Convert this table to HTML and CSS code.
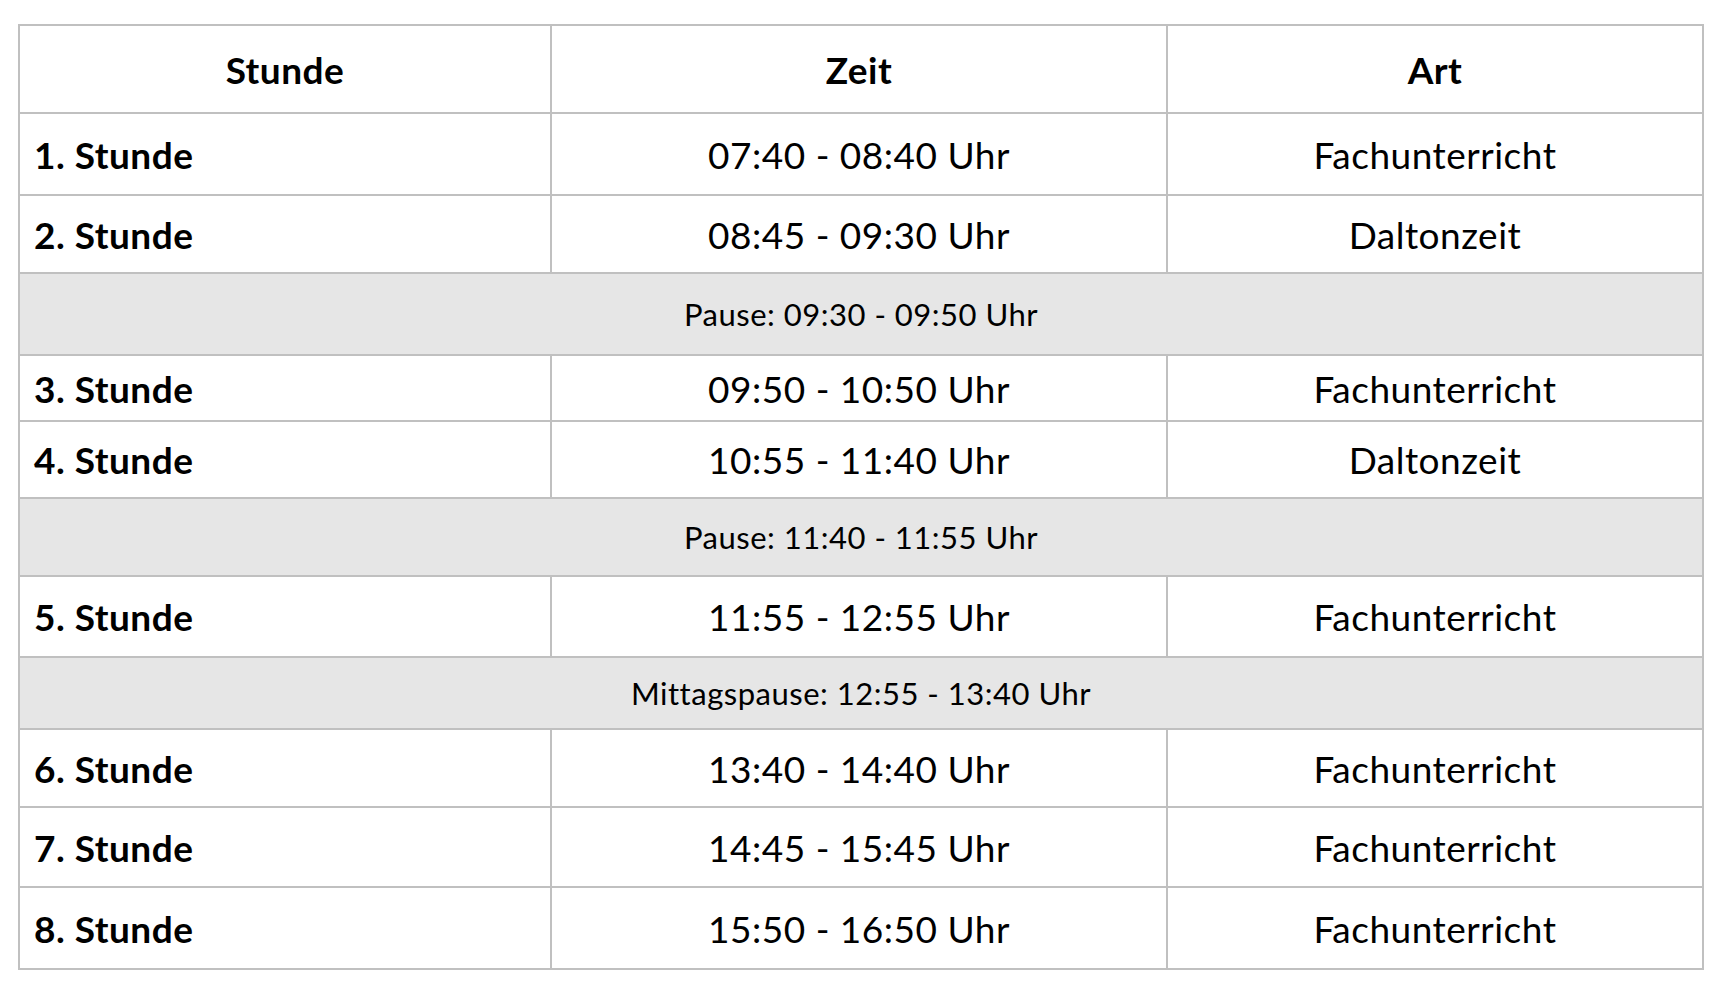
FILE: index.html
```html
<!DOCTYPE html>
<html lang="de">
<head>
<meta charset="utf-8">
<title>Stundenplan</title>
<link rel="stylesheet" href="styles.css">
</head>
<body>
<table class="plan">
  <colgroup>
    <col class="c1">
    <col class="c2">
    <col class="c3">
  </colgroup>
  <thead>
    <tr class="r-head">
      <th>Stunde</th>
      <th>Zeit</th>
      <th>Art</th>
    </tr>
  </thead>
  <tbody>
    <tr class="r82"><td class="nr">1. Stunde</td><td>07:40 - 08:40 Uhr</td><td>Fachunterricht</td></tr>
    <tr class="r78"><td class="nr">2. Stunde</td><td>08:45 - 09:30 Uhr</td><td>Daltonzeit</td></tr>
    <tr class="pause r82"><td colspan="3">Pause: 09:30 - 09:50 Uhr</td></tr>
    <tr class="r66"><td class="nr">3. Stunde</td><td>09:50 - 10:50 Uhr</td><td>Fachunterricht</td></tr>
    <tr class="r77"><td class="nr">4. Stunde</td><td>10:55 - 11:40 Uhr</td><td>Daltonzeit</td></tr>
    <tr class="pause r78"><td colspan="3">Pause: 11:40 - 11:55 Uhr</td></tr>
    <tr class="r81"><td class="nr">5. Stunde</td><td>11:55 - 12:55 Uhr</td><td>Fachunterricht</td></tr>
    <tr class="pause r72"><td colspan="3">Mittagspause: 12:55 - 13:40 Uhr</td></tr>
    <tr class="r78"><td class="nr">6. Stunde</td><td>13:40 - 14:40 Uhr</td><td>Fachunterricht</td></tr>
    <tr class="r80"><td class="nr">7. Stunde</td><td>14:45 - 15:45 Uhr</td><td>Fachunterricht</td></tr>
    <tr class="r82"><td class="nr">8. Stunde</td><td>15:50 - 16:50 Uhr</td><td>Fachunterricht</td></tr>
  </tbody>
</table>
</body>
</html>
```

FILE: styles.css
```css
html, body {
  margin: 0;
  padding: 0;
  background: #ffffff;
}

body {
  padding: 24px 0 0 18px;
  font-family: "Lato", "Liberation Sans", sans-serif;
  color: #000000;
}

.plan {
  border-collapse: collapse;
  table-layout: fixed;
  width: 1684px;
}

.c1 { width: 532px; }
.c2 { width: 616px; }
.c3 { width: 536px; }

.plan th,
.plan td {
  border: 2px solid #c0c0c0;
  padding: 0 14px;
  text-align: center;
  vertical-align: middle;
  font-size: 37px;
  letter-spacing: 0.5px;
  line-height: 1;
  box-sizing: border-box;
}

.plan th {
  font-weight: 700;
}

.plan td.nr {
  text-align: left;
  font-weight: 700;
}

.pause td {
  background: #e6e6e6;
  font-size: 31px;
}

.r-head { height: 88px; }
.r82 { height: 82px; }
.r81 { height: 81px; }
.r80 { height: 80px; }
.r78 { height: 78px; }
.r77 { height: 77px; }
.r72 { height: 72px; }
.r66 { height: 66px; }
```
